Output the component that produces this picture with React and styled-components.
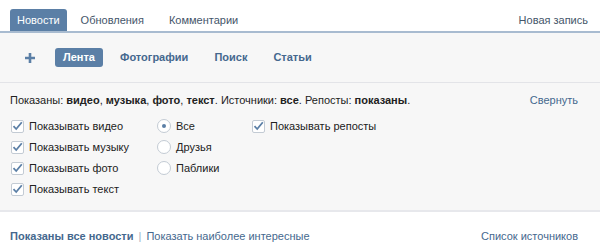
import React from "react";
import styled, { createGlobalStyle } from "styled-components";

const Global = createGlobalStyle`
  html, body { margin: 0; padding: 0; background: #fff; }
  body { font-family: "Liberation Sans", Arial, sans-serif; font-size: 11px; color: #000; }
`;

const Page = styled.div`
  width: 600px;
  height: 246px;
  display: flex;
  flex-direction: column;
  background: #fff;
  overflow: hidden;
`;

const TabBar = styled.div`
  display: flex;
  align-items: flex-end;
  height: 31px;
  padding: 0 12px 0 10px;
  border-bottom: 2px solid #a8bbd0;
`;

const Tab = styled.div`
  height: 22px;
  line-height: 22px;
  padding: 0 7px;
  margin-right: ${p => (p.$active ? "7px" : "11px")};
  border-radius: 3px 3px 0 0;
  background: ${p => (p.$active ? "#5b7fa6" : "transparent")};
  color: ${p => (p.$active ? "#fff" : "#45566a")};
`;

const Spacer = styled.div`flex: 1;`;

const TabLink = styled.div`
  height: 22px;
  line-height: 22px;
  color: #45566a;
`;

const Gray = styled.div`
  background: #f7f7f7;
  display: flex;
  flex-direction: column;
`;

const Toolbar = styled.div`
  display: flex;
  align-items: center;
  height: 49px;
  padding: 0 0 0 24px;
  border-bottom: 1px solid #e3e4e8;
`;

const Plus = styled.svg`
  width: 12px;
  height: 12px;
  margin-right: 19px;
`;

const ToolItem = styled.div`
  height: 19px;
  line-height: 19px;
  padding: 0 8px;
  margin-right: ${p => (p.$active ? "9px" : "10px")};
  border-radius: 3px;
  font-weight: bold;
  background: ${p => (p.$active ? "#5b7fa6" : "transparent")};
  color: ${p => (p.$active ? "#fff" : "#45688e")};
`;

const Filters = styled.div`
  padding: 8px 22px 12px 10px;
  display: flex;
  flex-direction: column;
`;

const Summary = styled.div`
  display: flex;
  height: 18px;
  line-height: 18px;
  color: #222;
`;

const Link = styled.span`
  color: #45688e;
`;

const Columns = styled.div`
  display: flex;
  margin-top: 8px;
`;

const Column = styled.div`
  width: ${p => p.$w}px;
  display: flex;
  flex-direction: column;
  gap: 3px;
`;

const Option = styled.div`
  display: flex;
  align-items: center;
  height: 18px;
  color: #222;
`;

const Box = styled.span`
  width: 13px;
  height: 13px;
  box-sizing: border-box;
  border: 1px solid #c3cbd4;
  background: #fff;
  border-radius: 2px;
  margin: 0 5px 0 1px;
  display: flex;
  align-items: center;
  justify-content: center;
`;

const Radio = styled.span`
  width: 14px;
  height: 14px;
  box-sizing: border-box;
  border: 1px solid #c3cbd4;
  background: #fff;
  border-radius: 50%;
  margin: 0 5px 0 0;
  display: flex;
  align-items: center;
  justify-content: center;
  &::after {
    content: "";
    width: 4px;
    height: 4px;
    border-radius: 50%;
    background: ${p => (p.$on ? "#5b7fa6" : "transparent")};
  }
`;

const Footer = styled.div`
  flex: 1;
  border-top: 2px solid #e7e8ec;
  display: flex;
  align-items: flex-start;
  padding: 15px 22px 0 10px;
  line-height: 18px;
`;

const Strong = styled.span`
  font-weight: bold;
  color: #45688e;
`;

const Pipe = styled.span`
  color: #a0b0c2;
  margin: 0 5px;
`;

const Check = () => (
  <svg width="11" height="10" viewBox="0 0 11 10">
    <path d="M1.5 5.2 L4.2 8 L9.8 1.2" fill="none" stroke="#5b7fa6" strokeWidth="1.8" />
  </svg>
);

const CheckOpt = ({ children }) => (
  <Option>
    <Box><Check /></Box>
    {children}
  </Option>
);

const RadioOpt = ({ on, children }) => (
  <Option>
    <Radio $on={on} />
    {children}
  </Option>
);

export default function App() {
  return (
    <Page>
      <Global />
      <TabBar>
        <Tab $active>Новости</Tab>
        <Tab>Обновления</Tab>
        <Tab>Комментарии</Tab>
        <Spacer />
        <TabLink>Новая запись</TabLink>
      </TabBar>
      <Gray>
        <Toolbar>
          <Plus viewBox="0 0 12 12">
            <path d="M6 1 V11 M1 6 H11" stroke="#5b7fa6" strokeWidth="2.6" />
          </Plus>
          <ToolItem $active>Лента</ToolItem>
          <ToolItem>Фотографии</ToolItem>
          <ToolItem>Поиск</ToolItem>
          <ToolItem>Статьи</ToolItem>
        </Toolbar>
        <Filters>
          <Summary>
            <span>
              Показаны: <b>видео</b>, <b>музыка</b>, <b>фото</b>, <b>текст</b>. Источники: <b>все</b>. Репосты: <b>показаны</b>.
            </span>
            <Spacer />
            <Link>Свернуть</Link>
          </Summary>
          <Columns>
            <Column $w={147}>
              <CheckOpt>Показывать видео</CheckOpt>
              <CheckOpt>Показывать музыку</CheckOpt>
              <CheckOpt>Показывать фото</CheckOpt>
              <CheckOpt>Показывать текст</CheckOpt>
            </Column>
            <Column $w={94}>
              <RadioOpt on>Все</RadioOpt>
              <RadioOpt>Друзья</RadioOpt>
              <RadioOpt>Паблики</RadioOpt>
            </Column>
            <Column $w={200}>
              <CheckOpt>Показывать репосты</CheckOpt>
            </Column>
          </Columns>
        </Filters>
      </Gray>
      <Footer>
        <Strong>Показаны все новости</Strong>
        <Pipe>|</Pipe>
        <Link>Показать наиболее интересные</Link>
        <Spacer />
        <Link>Список источников</Link>
      </Footer>
    </Page>
  );
}
